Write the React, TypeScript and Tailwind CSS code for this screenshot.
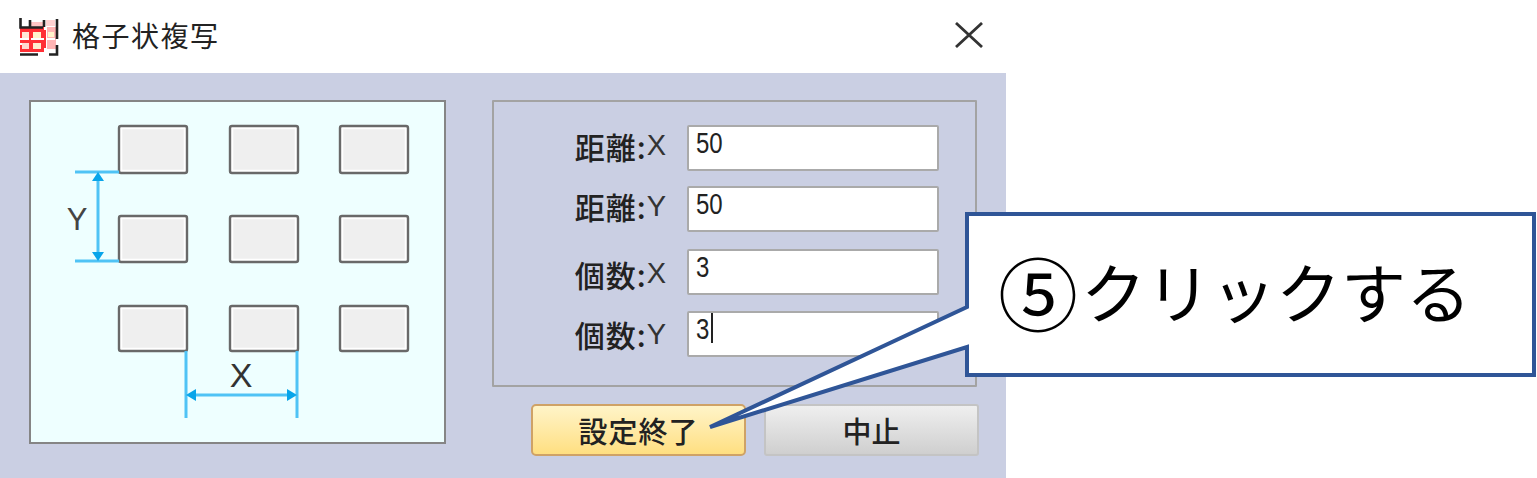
const jp = "font-['Noto_Sans_CJK_JP','Noto_Sans',sans-serif]";

const boxCols = [119, 230, 340];
const boxRows = [126, 216, 306];

function GridIcon() {
  return (
    <svg width="40" height="38" viewBox="0 0 40 38" className="shrink-0">
      <rect x="1" y="9" width="24" height="25" fill="#ff2f35" />
      <rect x="28" y="9" width="9" height="22" fill="#ffb4b4" />
      <rect x="12" y="4" width="12" height="5" fill="#ffc4c4" />
      <rect x="27" y="2" width="9" height="6" fill="#ffd2d2" />
      <path d="M0 21h25M0 26h3M27 21h9" stroke="#fff" strokeWidth="2" />
      <rect x="3" y="14" width="7" height="6" fill="#ffe9d8" />
      <rect x="14" y="14" width="8" height="6" fill="#fff4cc" />
      <rect x="3" y="25" width="7" height="6" fill="#ffd9d0" />
      <rect x="14" y="25" width="8" height="6" fill="#ffeed0" />
      <rect x="29" y="14" width="6" height="5" fill="#fff4cc" />
      <path d="M1.5 0V9.5H24M11 2V9M25 9V2" stroke="#222" strokeWidth="2.6" fill="none" />
      <path d="M38 1V21M38 27V36.5H30M1 36.5H19" stroke="#222" strokeWidth="2.6" fill="none" />
      <path d="M11 14V31M26 12V30" stroke="#ff2f35" strokeWidth="2" />
    </svg>
  );
}

function Diagram() {
  return (
    <svg width="415" height="342" viewBox="30 101 415 342" className="block">
      {boxRows.map((y) =>
        boxCols.map((x) => (
          <g key={`${x}-${y}`}>
            <rect x={x} y={y} width="68" height={y === 126 ? 47 : y === 216 ? 46 : 45} rx="2" fill="#efefef" stroke="#696969" strokeWidth="2.4" />
            <rect x={x + 2.5} y={y + 2.5} width="63" height={y === 126 ? 42 : y === 216 ? 41 : 40} fill="none" stroke="#fff" strokeWidth="1.5" />
          </g>
        ))
      )}
      <g stroke="#4fc3f5" strokeWidth="3" fill="none">
        <path d="M75 172H119M75 261H119M98 178V256" />
        <path d="M186 351V418M297 351V418M192 395H292" />
      </g>
      <g fill="#08a5ea">
        <path d="M98 172l6 9H92z" />
        <path d="M98 261l6-9H92z" />
        <path d="M186 395l10-6v12z" />
        <path d="M297 395l-10-6v12z" />
      </g>
      <text x="77" y="230" textAnchor="middle" fontSize="31" fill="#444" fontFamily="Liberation Sans">Y</text>
      <text x="241" y="387" textAnchor="middle" fontSize="34" fill="#333" fontFamily="Liberation Sans">X</text>
    </svg>
  );
}

function Field({ label, axis, value, caret, mt, labelMt }: { label: string; axis: string; value: string; caret?: boolean; mt: string; labelMt: string }) {
  return (
    <div className={`flex items-center ${mt}`}>
      <div className={`flex w-[175px] items-center justify-end pr-[21px] text-[#222] ${labelMt}`}>
        <span className={`${jp} text-[30px] font-medium leading-none tracking-[1px]`}>{label}:</span>
        <span className="font-['Liberation_Sans',sans-serif] text-[29px] leading-none text-[#333]">{axis}</span>
      </div>
      <div className="flex h-[46px] w-[252px] items-start rounded-[2px] border-[2px] border-[#aaaaaa] bg-white pl-[7px]">
        <span className="-mt-[2px] origin-top-left scale-x-[0.96] scale-y-[1.18] font-['Liberation_Sans',sans-serif] text-[25px] leading-[30px] text-[#222]">{value}</span>
        {caret && <span className="ml-[1px] h-[30px] w-[2px] bg-[#222]" />}
      </div>
    </div>
  );
}

function Callout() {
  return (
    <div className="absolute left-[700px] top-[210px] h-[170px] w-[837px]">
      <svg width="837" height="230" viewBox="700 210 837 230" className="absolute left-0 top-0">
        <path
          d="M967 214H1534V375H967V347L710 427L967 307Z"
          fill="#fff"
          stroke="#2f5597"
          strokeWidth="4"
        />
      </svg>
      <div className={`${jp} absolute left-[298px] top-[35px] flex h-[90px] items-center gap-[3px] whitespace-nowrap text-black`}>
        <span className="text-[80px] leading-none">⑤</span>
        <span className="text-[65px] leading-none">クリックする</span>
      </div>
    </div>
  );
}

export default function App() {
  return (
    <div className="relative h-[478px] w-[1537px] overflow-hidden bg-white">
      <div className="w-[1006px]">
        <div className="flex h-[73px] items-center pl-[19px] pr-[23px]">
          <GridIcon />
          <span className={`${jp} -mt-[3px] ml-[13px] text-[28px] tracking-[1.5px] text-[#222]`}>格子状複写</span>
          <svg width="28" height="26" viewBox="0 0 28 26" className="-mt-[3px] ml-auto">
            <path d="M1 1L27 25M27 1L1 25" stroke="#333" strokeWidth="2.8" />
          </svg>
        </div>
        <div className="flex h-[405px] items-start bg-[#cacfe3] pl-[29px] pt-[27px]">
          <div className="box-border h-[344px] w-[417px] border-[2px] border-[#858585] bg-[#eeffff]">
            <div className="-m-px"><Diagram /></div>
          </div>
          <div className="ml-[46px]">
            <div className="box-border h-[287px] w-[485px] rounded-[1px] border-[2px] border-[#a3a3a3] pl-[18px] pt-[23px]">
              <Field label="距離" axis="X" value="50" mt="" labelMt="-mt-[5px]" />
              <Field label="距離" axis="Y" value="50" mt="mt-[15px]" labelMt="-mt-[6px]" />
              <Field label="個数" axis="X" value="3" mt="mt-[17px]" labelMt="mt-[3px]" />
              <Field label="個数" axis="Y" value="3" caret mt="mt-[16px]" labelMt="" />
            </div>
            <div className="ml-[39px] mt-[17px] flex gap-[18px]">
              <button className={`${jp} h-[52px] w-[215px] rounded-[5px] border-[2px] border-[#cfa266] bg-gradient-to-b from-[#fff4c8] to-[#ffdf80] text-[29px] font-medium leading-none tracking-[1px] text-[#222]`}>
                設定終了
              </button>
              <button className={`${jp} h-[52px] w-[215px] rounded-[3px] border-[2px] border-[#c4c4c4] bg-gradient-to-b from-[#efefef] to-[#cfcfcf] text-[29px] font-medium leading-none text-[#222]`}>
                中止
              </button>
            </div>
          </div>
        </div>
      </div>
      <Callout />
    </div>
  );
}
